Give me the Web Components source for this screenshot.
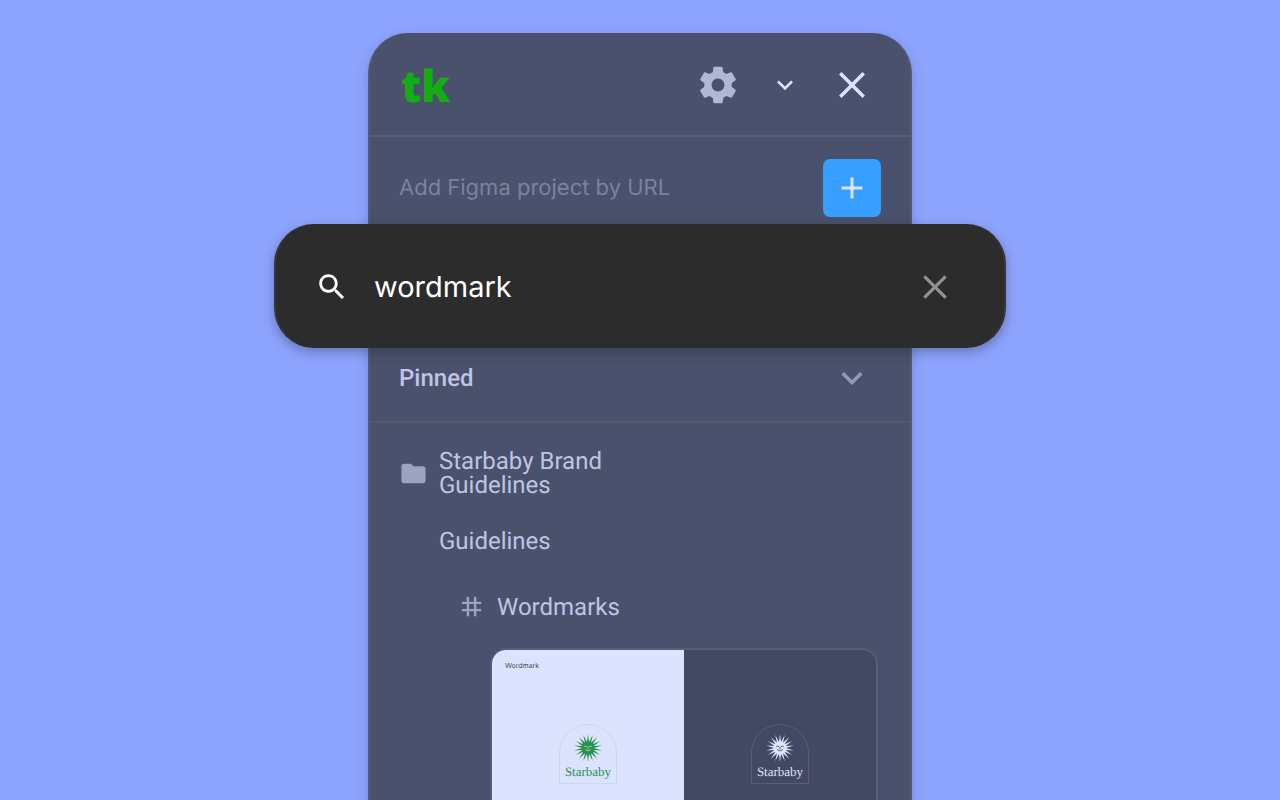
<!DOCTYPE html>
<html lang="en">
<head>
<meta charset="utf-8">
<meta name="viewport" content="width=device-width, initial-scale=1">
<title>tk</title>
<style>
    body {
        --panel: #4a516c;
        --line: #585e79;
        --text: #bdc4e4;
        --muted: #9ca2c1;
        --light: #dbe3ff;
        margin: 0;
        background: #8da4ff;
        color: var(--text);
        font: 24px/24px Roboto, sans-serif;
        text-rendering: geometricPrecision;
    }
</style>
</head>
<body>
<plugin-stage>
    <plugin-panel>
        <panel-header></panel-header>
        <add-project></add-project>
        <search-bar value="wordmark"></search-bar>
        <pinned-heading>Pinned</pinned-heading>
        <tree-row icon="folder">Starbaby Brand Guidelines</tree-row>
        <tree-row>Guidelines</tree-row>
        <tree-row icon="hash" nested>Wordmarks</tree-row>
        <frame-preview>
            <brand-badge slot="light">Starbaby</brand-badge>
            <brand-badge slot="dark">Starbaby</brand-badge>
        </frame-preview>
    </plugin-panel>
</plugin-stage>

<script>
const ICONS = {
    gear: '<path fill="currentColor" d="M19.43 12.98c.04-.32.07-.64.07-.98s-.03-.66-.07-.98l2.11-1.65c.19-.15.24-.42.12-.64l-2-3.46c-.12-.22-.39-.3-.61-.22l-2.49 1c-.52-.4-1.08-.73-1.69-.98l-.38-2.65C14.46 2.18 14.25 2 14 2h-4c-.25 0-.46.18-.49.42l-.38 2.65c-.61.25-1.17.59-1.69.98l-2.49-1c-.23-.09-.49 0-.61.22l-2 3.46c-.13.22-.07.49.12.64l2.11 1.65c-.04.32-.07.65-.07.98s.03.66.07.98l-2.11 1.65c-.19.15-.24.42-.12.64l2 3.46c.12.22.39.3.61.22l2.49-1c.52.4 1.08.73 1.69.98l.38 2.65c.03.24.24.42.49.42h4c.25 0 .46-.18.49-.42l.38-2.65c.61-.25 1.17-.59 1.69-.98l2.49 1c.23.09.49 0 .61-.22l2-3.46c.12-.22.07-.49-.12-.64l-2.11-1.65zM12 15.5c-1.93 0-3.5-1.57-3.5-3.5s1.57-3.5 3.5-3.5 3.5 1.57 3.5 3.5-1.57 3.5-3.5 3.5z"/>',
    chevron: '<path fill="currentColor" d="M16.59 8.59 12 13.17 7.41 8.59 6 10l6 6 6-6z"/>',
    close: '<path fill="none" stroke="currentColor" stroke-width="1.9" d="M5.6 5.6l12.8 12.8M18.4 5.6L5.6 18.4"/>',
    plus: '<path fill="none" stroke="currentColor" stroke-width="2" d="M12 5v14M5 12h14"/>',
    search: '<path fill="currentColor" d="M15.5 14h-.79l-.28-.27C15.41 12.59 16 11.11 16 9.5 16 5.91 13.09 3 9.5 3S3 5.91 3 9.5 5.91 16 9.5 16c1.61 0 3.09-.59 4.23-1.57l.27.28v.79l5 4.99L20.49 19l-4.99-5zm-6 0C7.01 14 5 11.99 5 9.5S7.01 5 9.5 5 14 7.01 14 9.5 11.99 14 9.5 14z"/>',
    folder: '<path fill="currentColor" d="M10 4H4c-1.1 0-1.99.9-1.99 2L2 18c0 1.1.9 2 2 2h16c1.1 0 2-.9 2-2V8c0-1.1-.9-2-2-2h-8l-2-2z"/>',
    hash: '<path fill="currentColor" d="M20 10V8h-4V4h-2v4h-4V4H8v4H4v2h4v4H4v2h4v4h2v-4h4v4h2v-4h4v-2h-4v-4h4zm-6 4h-4v-4h4v4z"/>'
};

function icon(name, size) {
    return `<svg width="${size}" height="${size}" viewBox="0 0 24 24" aria-hidden="true">${ICONS[name]}</svg>`;
}

const base = `
    * { box-sizing: border-box; }
    svg { display: block; }
    button {
        display: grid;
        place-items: center;
        width: 44px;
        height: 44px;
        margin: 0;
        padding: 0;
        border: 0;
        background: none;
        color: inherit;
        cursor: pointer;
    }
    input {
        flex: 1;
        min-width: 0;
        margin: 0;
        padding: 0;
        border: 0;
        outline: 0;
        background: none;
        text-rendering: inherit;
    }
`;

class PluginStage extends HTMLElement {
    connectedCallback() {
        this.attachShadow({ mode: 'open' }).innerHTML = `
            <style>
                :host {
                    display: flex;
                    justify-content: center;
                    align-items: flex-start;
                    box-sizing: border-box;
                    height: 100vh;
                    padding: 33px 24px 0;
                    overflow: hidden;
                }
            </style>
            <slot></slot>
        `;
    }
}

class PluginPanel extends HTMLElement {
    connectedCallback() {
        this.attachShadow({ mode: 'open' }).innerHTML = `
            <style>
                :host {
                    display: block;
                    box-sizing: border-box;
                    width: 100%;
                    max-width: 544px;
                    padding-bottom: 40px;
                    border: 2px solid #535973;
                    border-top: 0;
                    border-radius: 40px;
                    background: var(--panel);
                    box-shadow: 0 4px 12px rgba(40, 45, 90, 0.25);
                }
            </style>
            <slot></slot>
        `;
    }
}

class PanelHeader extends HTMLElement {
    connectedCallback() {
        this.attachShadow({ mode: 'open' }).innerHTML = `
            <style>
                ${base}
                :host {
                    display: flex;
                    align-items: center;
                    gap: 23px;
                    padding: 30px 36px 28px 31px;
                    border-bottom: 2px solid var(--line);
                    color: var(--light);
                }
                .logo {
                    margin-right: auto;
                    color: #14ae14;
                    font: 800 44px/44px "Open Sans", sans-serif;
                }
                .gear { color: #b1b7d6; }
            </style>
            <span class="logo">tk</span>
            <button class="gear" aria-label="Settings">${icon('gear', 44)}</button>
            <button aria-label="Collapse">${icon('chevron', 32)}</button>
            <button aria-label="Close">${icon('close', 44)}</button>
        `;
    }
}

class AddProject extends HTMLElement {
    connectedCallback() {
        this.attachShadow({ mode: 'open' }).innerHTML = `
            <style>
                ${base}
                :host {
                    display: flex;
                    align-items: center;
                    gap: 16px;
                    padding: 22px 29px 7px;
                }
                input {
                    color: var(--light);
                    font: 22px/28px Inter, sans-serif;
                }
                input::placeholder { color: #7b81a1; opacity: 1; }
                button {
                    width: 58px;
                    height: 58px;
                    border-radius: 7px;
                    background: #369fff;
                    color: var(--light);
                }
            </style>
            <input type="text" aria-label="Figma project URL" placeholder="Add Figma project by URL">
            <button aria-label="Add project">${icon('plus', 36)}</button>
        `;
    }
}

class SearchBar extends HTMLElement {
    connectedCallback() {
        this.attachShadow({ mode: 'open' }).innerHTML = `
            <style>
                ${base}
                :host {
                    display: flex;
                    align-items: center;
                    box-sizing: border-box;
                    min-height: 124px;
                    margin: 0 -96px;
                    padding: 1px 47px 0 39px;
                    border: solid #383838;
                    border-width: 0 2px;
                    border-radius: 40px;
                    background: #2c2c2c;
                    box-shadow: 0 4px 12px rgba(30, 32, 50, 0.35);
                    color: #fff;
                }
                input {
                    margin: 0 24px 0 25px;
                    color: #fff;
                    font: 29px/36px Inter, sans-serif;
                }
                button { color: #929292; }
            </style>
            ${icon('search', 34)}
            <input type="text" aria-label="Search" value="${this.getAttribute('value') || ''}">
            <button aria-label="Clear search">${icon('close', 40)}</button>
        `;
    }
}

class PinnedHeading extends HTMLElement {
    connectedCallback() {
        this.attachShadow({ mode: 'open' }).innerHTML = `
            <style>
                ${base}
                :host {
                    display: flex;
                    align-items: center;
                    justify-content: space-between;
                    padding: 8px 36px 21px 29px;
                    border-bottom: 2px solid #535973;
                }
                h2 { margin: 0; font: inherit; font-weight: 500; }
                button { color: #9299b8; }
            </style>
            <h2><slot></slot></h2>
            <button aria-label="Toggle pinned">${icon('chevron', 42)}</button>
        `;
    }
}

class TreeRow extends HTMLElement {
    connectedCallback() {
        const name = this.getAttribute('icon');
        this.attachShadow({ mode: 'open' }).innerHTML = `
            <style>
                ${base}
                :host {
                    display: flex;
                    align-items: center;
                    gap: 11px;
                    padding: 26px 29px 6px;
                }
                :host([nested]) {
                    padding: 33px 29px 27px 87px;
                }
                .icon { flex: none; width: 29px; color: var(--muted); }
                .label { max-width: 200px; }
            </style>
            <span class="icon">${name ? icon(name, 29) : ''}</span>
            <span class="label"><slot></slot></span>
        `;
    }
}

class FramePreview extends HTMLElement {
    connectedCallback() {
        this.attachShadow({ mode: 'open' }).innerHTML = `
            <style>
                ${base}
                :host {
                    display: grid;
                    grid-template-columns: 1fr 1fr;
                    height: 216px;
                    margin: 0 32px 0 120px;
                    border: 2px solid var(--line);
                    border-radius: 16px;
                    overflow: hidden;
                    background: #434963;
                }
                .half {
                    display: flex;
                    flex-direction: column;
                    align-items: center;
                    color: var(--light);
                    --outline: #585e79;
                    --face: #434963;
                }
                .light {
                    background: var(--light);
                    color: #2b914c;
                    --outline: #c3dce8;
                    --face: #b5dccb;
                }
                .title {
                    align-self: stretch;
                    height: 74px;
                    padding: 11px 13px 0;
                    color: #434963;
                    font: 7px/10px Inter, sans-serif;
                }
            </style>
            <div class="half light">
                <div class="title">Wordmark</div>
                <slot name="light"></slot>
            </div>
            <div class="half">
                <div class="title"></div>
                <slot name="dark"></slot>
            </div>
        `;
    }
}

class BrandBadge extends HTMLElement {
    connectedCallback() {
        this.attachShadow({ mode: 'open' }).innerHTML = `
            <style>
                ${base}
                :host {
                    display: flex;
                    flex-direction: column;
                    align-items: center;
                    box-sizing: border-box;
                    width: 58px;
                    height: 60px;
                    padding-top: 8px;
                    border: 1px solid var(--outline);
                    border-radius: 29px 29px 0 0;
                    font: 13px/18px "Liberation Serif", serif;
                }
            </style>
            <svg width="30" height="30" viewBox="-15 -15 30 30" aria-hidden="true">
                <path fill="currentColor" d="${this.rays(18)}"/>
                <circle r="6.5" fill="currentColor"/>
                <path fill="none" stroke="var(--face)" stroke-width="0.8" stroke-linecap="round" d="M-3.5-1.5q1.2-1 2.4 0M1.1-1.5q1.2-1 2.4 0M0-1v2M-2.6 1.8q2.6 2.6 5.2 0"/>
            </svg>
            <slot></slot>
        `;
    }

    // thin spikes all the way round the sun's face
    rays(count) {
        const step = Math.PI * 2 / count;
        let d = '';
        for (let i = 0; i < count; i++) {
            [[i, 14], [i + 0.5, 6]].forEach(([turn, r]) => {
                const a = turn * step - Math.PI / 2;
                d += (d ? 'L' : 'M') + (r * Math.cos(a)).toFixed(2) + ' ' + (r * Math.sin(a)).toFixed(2);
            });
        }
        return d + 'z';
    }
}

customElements.define('plugin-stage', PluginStage);
customElements.define('plugin-panel', PluginPanel);
customElements.define('panel-header', PanelHeader);
customElements.define('add-project', AddProject);
customElements.define('search-bar', SearchBar);
customElements.define('pinned-heading', PinnedHeading);
customElements.define('tree-row', TreeRow);
customElements.define('frame-preview', FramePreview);
customElements.define('brand-badge', BrandBadge);
</script>
</body>
</html>
